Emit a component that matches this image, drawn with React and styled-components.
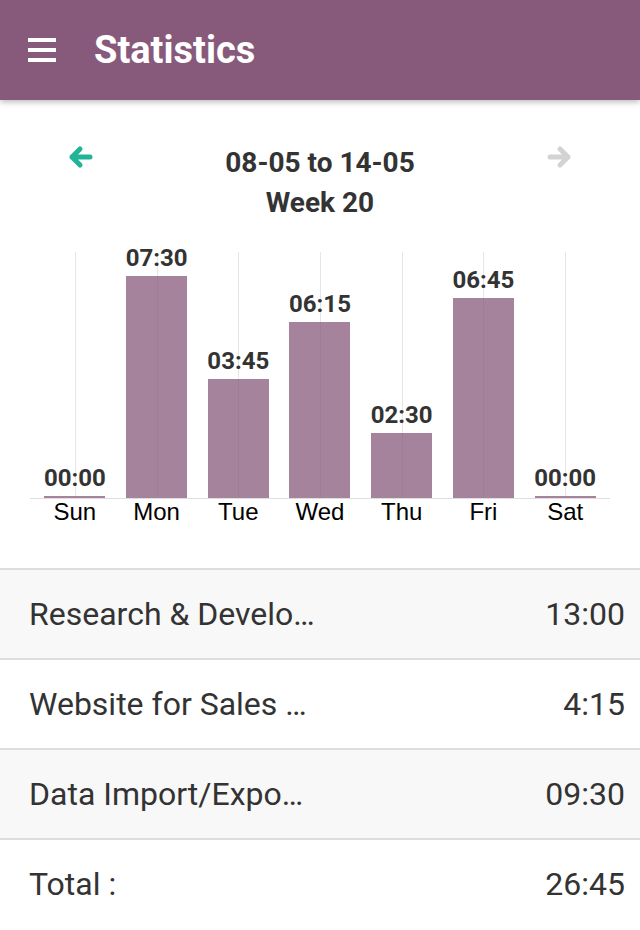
import React from "react";
import styled, { createGlobalStyle } from "styled-components";

const GlobalStyle = createGlobalStyle`
  html, body {
    margin: 0;
    padding: 0;
    background: #fff;
  }
  body {
    font-family: Roboto, "Noto Sans", sans-serif;
    color: #333;
  }
`;

const days = [
  { day: "Sun", value: "00:00", height: 2 },
  { day: "Mon", value: "07:30", height: 222 },
  { day: "Tue", value: "03:45", height: 119 },
  { day: "Wed", value: "06:15", height: 176 },
  { day: "Thu", value: "02:30", height: 65 },
  { day: "Fri", value: "06:45", height: 200 },
  { day: "Sat", value: "00:00", height: 2 },
];

const projects = [
  { name: "Research & Develo…", time: "13:00" },
  { name: "Website for Sales …", time: "4:15" },
  { name: "Data Import/Expo…", time: "09:30" },
];

const Page = styled.div`
  width: 640px;
  min-height: 930px;
  background: #fff;
`;

const Header = styled.header`
  height: 100px;
  background: #875a7b;
  display: flex;
  align-items: center;
  padding-left: 28px;
  box-shadow: 0 2px 6px rgba(0, 0, 0, 0.28);
  position: relative;
  z-index: 1;
`;

const Burger = styled.div`
  width: 28px;
  display: flex;
  flex-direction: column;
  gap: 6px;

  span {
    display: block;
    height: 4px;
    background: #fff;
  }
`;

const Title = styled.h1`
  margin: 0 0 0 38px;
  color: #fff;
  font-size: 38px;
  font-weight: 700;
  line-height: 1;
`;

const Nav = styled.div`
  display: grid;
  grid-template-columns: 1fr auto 1fr;
  align-items: start;
  padding: 43px 67px 0;
`;

const ArrowButton = styled.button`
  border: none;
  background: none;
  padding: 0;
  margin-top: 1px;
  width: 26px;
  height: 26px;
  justify-self: ${(p) => (p.right ? "end" : "start")};
  color: ${(p) => (p.disabled ? "#d3d3d3" : "#21b496")};
  cursor: pointer;

  svg {
    display: block;
  }
`;

const Range = styled.div`
  text-align: center;
  font-size: 28px;
  font-weight: 700;
  line-height: 40px;
  color: #333;
`;

const Chart = styled.div`
  padding: 29px 30px 0;
`;

const Plot = styled.div`
  display: grid;
  grid-template-columns: repeat(7, 1fr);
  grid-template-rows: 246px;
  height: 246px;
  padding: 0 4px;
  border-bottom: 1px solid #dedede;
`;

const Column = styled.div`
  position: relative;
  min-height: 0;
  display: flex;
  flex-direction: column;
  justify-content: flex-end;
  align-items: center;

  &::before {
    content: "";
    position: absolute;
    top: 0;
    bottom: 0;
    left: 50%;
    width: 1px;
    background: #e6e6e6;
  }
`;

const Value = styled.span`
  position: relative;
  font-size: 24px;
  font-weight: 700;
  line-height: 1;
  color: #333;
  margin-bottom: 6px;
`;

const Bar = styled.div`
  position: relative;
  flex-shrink: 0;
  width: 61px;
  background: rgba(135, 90, 123, 0.75);
`;

const Days = styled.div`
  display: grid;
  grid-template-columns: repeat(7, 1fr);
  padding: 0 4px;
  margin-top: 1px;
`;

const Day = styled.span`
  text-align: center;
  font-family: "Liberation Sans", Arial, sans-serif;
  font-size: 24px;
  line-height: 1;
  color: #000;
`;

const List = styled.div`
  margin-top: 44px;
`;

const Row = styled.div`
  display: flex;
  justify-content: space-between;
  align-items: center;
  height: 88px;
  padding: 0 15px 0 29px;
  border-top: 2px solid #dddddd;
  background: ${(p) => (p.shaded ? "#f8f8f8" : "#fff")};
  font-size: 32px;
  color: #333;
  white-space: nowrap;
`;

const Arrow = ({ dir }) => (
  <svg width="26" height="26" viewBox="0 0 26 26" fill="none">
    <path
      d={
        dir === "left"
          ? "M23 13H5M13 5L5 13l8 8"
          : "M3 13h18M13 5l8 8-8 8"
      }
      stroke="currentColor"
      strokeWidth="5"
      strokeLinecap="round"
      strokeLinejoin="round"
    />
  </svg>
);

const App = () => {
  return (
    <>
      <GlobalStyle />
      <Page>
        <Header>
          <Burger>
            <span />
            <span />
            <span />
          </Burger>
          <Title>Statistics</Title>
        </Header>

        <Nav>
          <ArrowButton aria-label="Previous week">
            <Arrow dir="left" />
          </ArrowButton>
          <Range>
            <div>08-05 to 14-05</div>
            <div>Week 20</div>
          </Range>
          <ArrowButton right disabled aria-label="Next week">
            <Arrow dir="right" />
          </ArrowButton>
        </Nav>

        <Chart>
          <Plot>
            {days.map((d) => (
              <Column key={d.day}>
                <Value>{d.value}</Value>
                <Bar style={{ height: d.height }} />
              </Column>
            ))}
          </Plot>
          <Days>
            {days.map((d) => (
              <Day key={d.day}>{d.day}</Day>
            ))}
          </Days>
        </Chart>

        <List>
          {projects.map((p, i) => (
            <Row key={p.name} shaded={i % 2 === 0}>
              <span>{p.name}</span>
              <span>{p.time}</span>
            </Row>
          ))}
          <Row>
            <span>Total :</span>
            <span>26:45</span>
          </Row>
        </List>
      </Page>
    </>
  );
};

export default App;
